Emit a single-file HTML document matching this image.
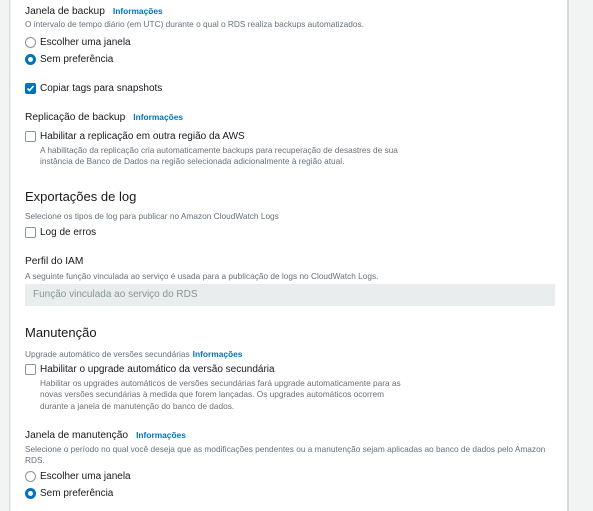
<!DOCTYPE html>
<html><head><meta charset="utf-8"><style>
*{margin:0;padding:0;box-sizing:border-box}
body{width:593px;height:511px;overflow:hidden;background:#f2f3f3;font-family:"Liberation Sans",Arial,sans-serif;color:#16191f;position:relative}
#l{position:absolute;left:0;top:0;width:10px;height:511px;background:#f2f3f3;border-right:1px solid #d5dbdb}
#m{position:absolute;left:11px;top:0;width:558px;height:511px;background:#fff;border-right:2px solid #d5dbdb}
.t{position:absolute;white-space:nowrap;line-height:1}
.h{font-size:10.2px}
.H{font-size:13px}
.d{font-size:8.3px;color:#687078}
.a{font-size:10px}
.i{font-size:8.4px;color:#0073bb;font-weight:bold;margin-left:8px}
.r{position:absolute;width:11px;height:11px;border:1px solid #879596;border-radius:50%;background:#fff}
.rs{border:3px solid #0073bb}
.c{position:absolute;width:11px;height:11px;border:1px solid #879596;border-radius:2px;background:#fff}
.cs{background:#0073bb;border-color:#0073bb}
</style></head><body>
<div id="l"></div><div id="m"></div>
<div class="t h" style="left:25px;top:7px">Janela de backup<span class="i">Informações</span></div>
<div class="t d" style="left:25px;top:20px">O intervalo de tempo diário (em UTC) durante o qual o RDS realiza backups automatizados.</div>
<div class="r" style="left:25px;top:37px"></div><div class="t a" style="left:40px;top:38px">Escolher uma janela</div>
<div class="r rs" style="left:25px;top:54px"></div><div class="t a" style="left:40px;top:55px">Sem preferência</div>
<div class="c cs" style="left:25px;top:83px"><svg width="9" height="9" style="position:absolute;left:0;top:0"><path d="M1.5 4.5l2 2 4-4.5" stroke="#fff" stroke-width="1.6" fill="none"/></svg></div><div class="t a" style="left:40px;top:84px">Copiar tags para snapshots</div>
<div class="t h" style="left:25px;top:113px">Replicação de backup<span class="i">Informações</span></div>
<div class="c" style="left:25px;top:131px"></div><div class="t a" style="left:40px;top:132px">Habilitar a replicação em outra região da AWS</div>
<div class="t d" style="left:40px;top:146px">A habilitação da replicação cria automaticamente backups para recuperação de desastres de sua</div>
<div class="t d" style="left:40px;top:157px">instância de Banco de Dados na região selecionada adicionalmente à região atual.</div>
<div class="t H" style="left:25px;top:190px">Exportações de log</div>
<div class="t d" style="left:25px;top:212px">Selecione os tipos de log para publicar no Amazon CloudWatch Logs</div>
<div class="c" style="left:25px;top:227px"></div><div class="t a" style="left:40px;top:228px">Log de erros</div>
<div class="t h" style="left:25px;top:257px">Perfil do IAM</div>
<div class="t d" style="left:25px;top:272px">A seguinte função vinculada ao serviço é usada para a publicação de logs no CloudWatch Logs.</div>
<div style="position:absolute;left:25px;top:284px;width:530px;height:22px;background:#eaeded"></div>
<div class="t a" style="left:33px;top:290px;color:#879596">Função vinculada ao serviço do RDS</div>
<div class="t H" style="left:25px;top:326px">Manutenção</div>
<div class="t d" style="left:25px;top:350px">Upgrade automático de versões secundárias<span class="i" style="margin-left:3px">Informações</span></div>
<div class="c" style="left:25px;top:364px"></div><div class="t a" style="left:40px;top:365px">Habilitar o upgrade automático da versão secundária</div>
<div class="t d" style="left:40px;top:379px">Habilitar os upgrades automáticos de versões secundárias fará upgrade automaticamente para as</div>
<div class="t d" style="left:40px;top:390px">novas versões secundárias à medida que forem lançadas. Os upgrades automáticos ocorrem</div>
<div class="t d" style="left:40px;top:402px">durante a janela de manutenção do banco de dados.</div>
<div class="t h" style="left:25px;top:431px">Janela de manutenção<span class="i">Informações</span></div>
<div class="t d" style="left:25px;top:445px">Selecione o período no qual você deseja que as modificações pendentes ou a manutenção sejam aplicadas ao banco de dados pelo Amazon</div>
<div class="t d" style="left:25px;top:456px">RDS.</div>
<div class="r" style="left:25px;top:471px"></div><div class="t a" style="left:40px;top:472px">Escolher uma janela</div>
<div class="r rs" style="left:25px;top:488px"></div><div class="t a" style="left:40px;top:489px">Sem preferência</div>
</body></html>
